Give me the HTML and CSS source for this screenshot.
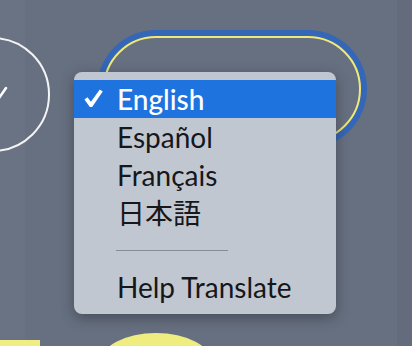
FILE: index.html
```html
<!DOCTYPE html>
<html>
    <head>
        <title>Language Menu</title>
        <link rel="stylesheet" href="styles.css">
    </head>
    <body>
        <div class="stage">
            <div class="stripLeft"></div>
            <div class="stripRight"></div>

            <div class="doneCircle">
                <svg class="doneTick" width="20" height="30" viewBox="0 0 20 30">
                    <path d="M2 14 L9 4" stroke="#ffffff" stroke-width="2.5" fill="none" stroke-linecap="round"/>
                </svg>
            </div>

            <div class="langPill"></div>

            <div class="yellowBlock"></div>
            <div class="yellowBlob"></div>

            <div class="menu">
                <div class="menuItem selected">
                    <svg class="check" width="20" height="20" viewBox="0 0 24 24">
                        <path d="M0.5 12.5 L4.2 10 L8.3 15.2 L19 0.5 L22.5 3 L9.8 21.5 L7 21.5 Z" fill="#ffffff"/>
                    </svg>
                    <span>English</span>
                </div>
                <div class="menuItem"><span>Español</span></div>
                <div class="menuItem"><span>Français</span></div>
                <div class="menuItem"><span>日本語</span></div>
                <div class="separator"><hr></div>
                <div class="menuItem"><span>Help Translate</span></div>
            </div>
        </div>
    </body>
</html>
```
FILE: styles.css
```css
body {
 margin: 0;
 background-color: #687080;
 font-family: Lato, "Noto Sans CJK JP", sans-serif;
 overflow: hidden;
}

.stage {
 position: relative;
 width: 412px;
 height: 346px;
 overflow: hidden;
 background-color: #677080;
}

.stripLeft {
 position: absolute;
 left: 0;
 top: 0;
 width: 25px;
 height: 346px;
 background-color: #6a7383;
}
.stripRight {
 position: absolute;
 right: 0;
 top: 0;
 width: 15px;
 height: 346px;
 background-color: #636b7c;
}

.doneCircle {
 position: absolute;
 left: -65px;
 top: 37px;
 width: 111px;
 height: 111px;
 border: 2px solid #f4f4f4;
 border-radius: 50%;
}
.doneTick {
 position: absolute;
 left: 60px;
 top: 45px;
}

.langPill {
 position: absolute;
 left: 103px;
 top: 36px;
 width: 254px;
 height: 102px;
 border: 2px solid #efe97a;
 border-radius: 60px;
 box-shadow: 0 0 0 6px #3567b8;
}

.yellowBlock {
 position: absolute;
 left: 0;
 top: 340px;
 width: 40px;
 height: 10px;
 background-color: #f0ee82;
}
.yellowBlob {
 position: absolute;
 left: 100px;
 top: 333px;
 width: 112px;
 height: 60px;
 border-radius: 50%;
 background-color: #efed80;
}

.menu {
 position: absolute;
 left: 74px;
 top: 72px;
 width: 262px;
 padding: 8px 0;
 background-color: #c1c7d1;
 border-radius: 8px;
 box-shadow: 0 4px 14px rgba(30, 35, 45, 0.45);
}

.menuItem {
 display: flex;
 align-items: center;
 height: 38px;
 padding-left: 43px;
 font-size: 28px;
 color: #15171a;
}
.menuItem span {
 line-height: 38px;
}
.menuItem.selected {
 position: relative;
 background-color: #1e73df;
 color: #ffffff;
 font-weight: 500;
}
.menuItem .check {
 position: absolute;
 left: 10px;
 top: 9px;
}

.separator {
 height: 36px;
 display: flex;
 align-items: center;
 padding-left: 42px;
}
.separator hr {
 width: 112px;
 margin: 0;
 border: none;
 border-top: 1px solid #878d97;
}
```
